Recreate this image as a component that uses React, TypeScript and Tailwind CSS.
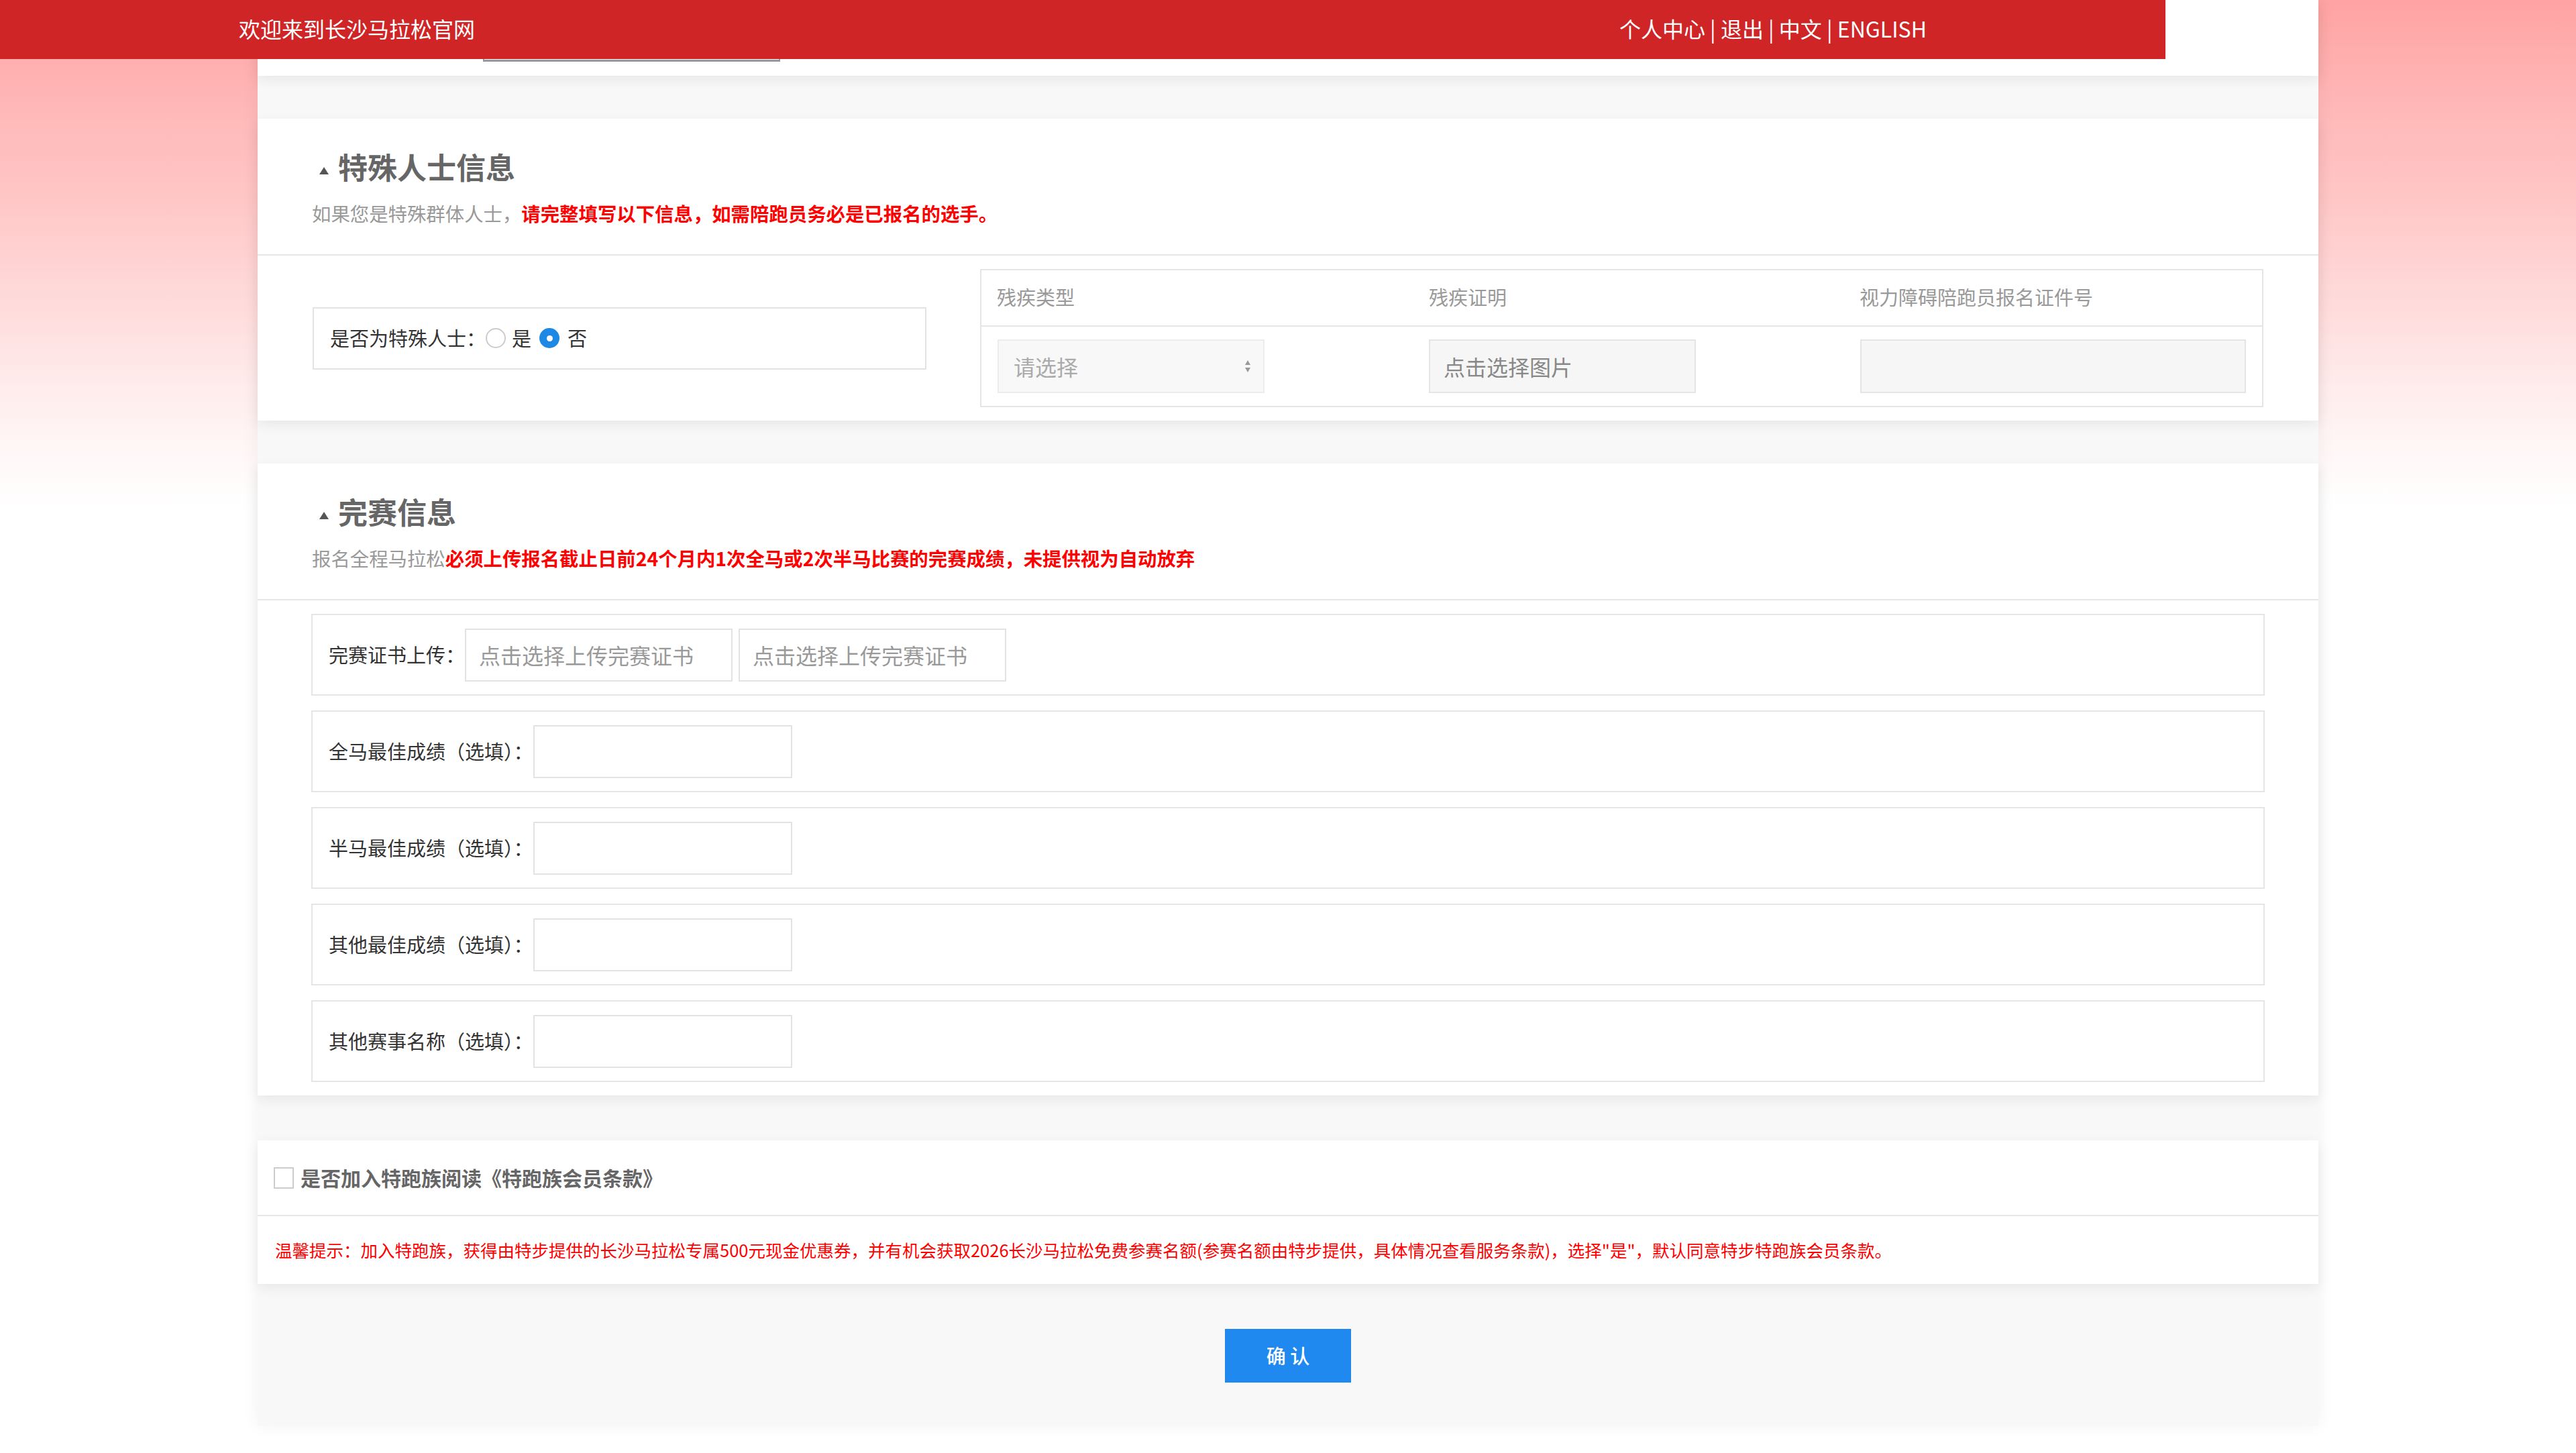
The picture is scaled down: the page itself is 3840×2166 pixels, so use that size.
import React from "react";

const FONT = "font-['Noto_Sans_CJK_SC','Noto_Sans',sans-serif]";

function SectionHead({ title, gray, red }: { title: string; gray: string; red: string }) {
  return (
    <div className="border-b-2 border-[#e6e6e6] pl-[81px] pr-[80px] pt-[49px] pb-[46px]">
      <div className="flex items-center">
        <span className="ml-[11px] mr-[14px] mt-[12px] inline-block h-0 w-0 border-x-[7px] border-b-[11px] border-x-transparent border-b-[#555]" />
        <h2 className="text-[44px] font-bold leading-[44px] text-[#666]">{title}</h2>
      </div>
      <p className="mt-[33px] text-[28.4px] leading-[30px] text-[#999]">
        {gray}
        <span className="font-bold text-[#ff0000]">{red}</span>
      </p>
    </div>
  );
}

function Radio({ checked }: { checked?: boolean }) {
  return checked ? (
    <span className="flex h-[30px] w-[30px] items-center justify-center rounded-full bg-[#1e88e5]">
      <span className="h-[9px] w-[9px] rounded-full bg-white" />
    </span>
  ) : (
    <span className="h-[30px] w-[30px] rounded-full border-2 border-[#cccccc] bg-white" />
  );
}

function ResultRow({ label }: { label: string }) {
  return (
    <div className="flex h-[122px] items-center border-2 border-[#e5e5e5] pl-[24px]">
      <span className="text-[29px] text-[#333]">{label}</span>
      <div className="h-[79px] w-[386px] border-2 border-[#e3e3e3] bg-white" />
    </div>
  );
}

export default function App() {
  return (
    <div
      className={`relative min-h-screen w-full bg-[linear-gradient(180deg,#ffa3a3_0px,#ffb6b6_150px,#ffc8c8_310px,#ffdcdc_460px,#ffecec_580px,#fff8f8_680px,#ffffff_760px)] ${FONT}`}
    >
      <header className="absolute left-0 top-0 z-10 flex h-[88px] w-[3228px] items-center justify-between bg-[#cf2526] px-[356px] pb-[4px] text-[32px] text-white">
        <span>欢迎来到长沙马拉松官网</span>
        <span>个人中心 | 退出 | 中文 | ENGLISH</span>
      </header>

      <main className="mx-auto w-[3072px] bg-[#f8f8f8] pb-[64px] shadow-[0_0_24px_rgba(0,0,0,0.06)]">
        {/* tail of the previous card, under the header */}
        <div className="flex h-[113px] items-end bg-white pb-[21px] shadow-[0_6px_18px_rgba(0,0,0,0.07)]">
          <div className="ml-[336px] h-[40px] w-[443px] border-x-2 border-b-[3px] border-[#999]" />
        </div>

        {/* 特殊人士信息 */}
        <section className="mt-[64px] bg-white shadow-[0_6px_18px_rgba(0,0,0,0.07)]">
          <SectionHead
            title="特殊人士信息"
            gray="如果您是特殊群体人士，"
            red="请完整填写以下信息，如需陪跑员务必是已报名的选手。"
          />
          <div className="flex items-center justify-between px-[82px] py-[20px]">
            <div className="flex h-[93px] w-[915px] items-center border-2 border-[#e3e3e3] pl-[24px] text-[29px] text-[#333]">
              <span>是否为特殊人士：</span>
              <Radio />
              <span className="ml-[9px] mr-[12px]">是</span>
              <Radio checked />
              <span className="ml-[12px]">否</span>
            </div>

            <div className="w-[1913px] border-2 border-[#e5e5e5]">
              <div className="grid h-[84px] grid-cols-[644px_642px_1fr] items-center border-b-2 border-[#e5e5e5] pb-[2px] text-[29px] text-[#999]">
                <span className="pl-[23px]">残疾类型</span>
                <span className="pl-[23px]">残疾证明</span>
                <span className="pl-[23px]">视力障碍陪跑员报名证件号</span>
              </div>
              <div className="grid h-[118px] grid-cols-[644px_642px_1fr] items-center">
                <div className="pl-[24px]">
                  <div className="flex h-[80px] w-[398px] items-center justify-between border-2 border-[#ececec] bg-[#f8f8f8] pl-[22px] pr-[18px] text-[32px] text-[#aaa]">
                    <span>请选择</span>
                    <svg width="10" height="24" viewBox="0 0 10 24">
                      <path d="M5 3 L9 10 L1 10 Z" fill="#999" />
                      <path d="M5 21 L9 14 L1 14 Z" fill="#999" />
                    </svg>
                  </div>
                </div>
                <div className="pl-[23px]">
                  <div className="flex h-[80px] w-[398px] items-center border-2 border-[#e5e5e5] bg-[#f6f6f6] pl-[20px] text-[32px] text-[#888]">
                    点击选择图片
                  </div>
                </div>
                <div className="pl-[24px]">
                  <div className="h-[80px] w-[575px] border-2 border-[#e5e5e5] bg-[#f6f6f6]" />
                </div>
              </div>
            </div>
          </div>
        </section>

        {/* 完赛信息 */}
        <section className="mt-[64px] bg-white shadow-[0_6px_18px_rgba(0,0,0,0.07)]">
          <SectionHead
            title="完赛信息"
            gray="报名全程马拉松"
            red="必须上传报名截止日前24个月内1次全马或2次半马比赛的完赛成绩，未提供视为自动放弃"
          />
          <div className="flex flex-col gap-[22px] px-[80px] py-[20px]">
            <div className="flex h-[122px] items-center border-2 border-[#e5e5e5] pl-[24px]">
              <span className="text-[29px] text-[#333]">完赛证书上传：</span>
              <div className="flex gap-[9px]">
                <div className="flex h-[79px] w-[399px] items-center border-2 border-[#e3e3e3] pl-[19px] text-[32px] text-[#999]">
                  点击选择上传完赛证书
                </div>
                <div className="flex h-[79px] w-[399px] items-center border-2 border-[#e3e3e3] pl-[19px] text-[32px] text-[#999]">
                  点击选择上传完赛证书
                </div>
              </div>
            </div>
            <ResultRow label="全马最佳成绩（选填）：" />
            <ResultRow label="半马最佳成绩（选填）：" />
            <ResultRow label="其他最佳成绩（选填）：" />
            <ResultRow label="其他赛事名称（选填）：" />
          </div>
        </section>

        {/* 特跑族 */}
        <section className="mt-[67px] bg-white shadow-[0_6px_18px_rgba(0,0,0,0.07)]">
          <div className="flex h-[113px] items-center border-b-2 border-[#e6e6e6] px-[24px]">
            <span className="h-[32px] w-[30px] border-2 border-[#cccccc] bg-white" />
            <span className="ml-[10px] text-[30px] font-bold text-[#666]">是否加入特跑族阅读《特跑族会员条款》</span>
          </div>
          <div className="flex h-[101px] items-center px-[26px] text-[25.5px] text-[#ff0000]">
            温馨提示：加入特跑族，获得由特步提供的长沙马拉松专属500元现金优惠券，并有机会获取2026长沙马拉松免费参赛名额(参赛名额由特步提供，具体情况查看服务条款)，选择"是"，默认同意特步特跑族会员条款。
          </div>
        </section>

        <div className="flex justify-center pt-[67px]">
          <button className="h-[80px] w-[188px] bg-[#1f89ef] text-[29px] font-medium text-white">确 认</button>
        </div>
      </main>
    </div>
  );
}
